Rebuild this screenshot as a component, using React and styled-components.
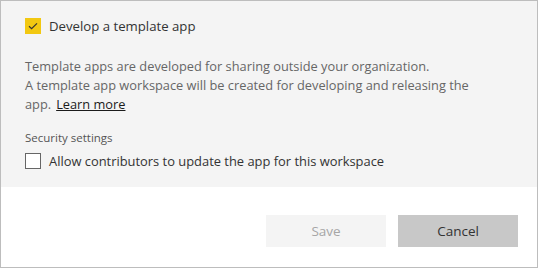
import React from 'react';
import styled, { createGlobalStyle } from 'styled-components';

const GlobalStyle = createGlobalStyle`
  html, body {
    margin: 0;
    padding: 0;
    background: #ffffff;
  }
  body {
    font-family: "Open Sans", "Noto Sans", sans-serif;
  }
`;

const Dialog = styled.div`
  width: 538px;
  height: 268px;
  box-sizing: border-box;
  border: 1px solid #bdbdbd;
  display: flex;
  flex-direction: column;
  background: #ffffff;
`;

const Panel = styled.div`
  background: #f4f4f4;
  height: 186px;
  box-sizing: border-box;
  padding: 17px 24px 0 24px;
  display: flex;
  flex-direction: column;
`;

const CheckRow = styled.label`
  display: flex;
  align-items: center;
  gap: 8px;
  margin-top: ${(p) => p.$offset || 0}px;
  font-size: ${(p) => (p.$large ? '13.2px' : '12.9px')};
  line-height: 16px;
  color: #333333;
  cursor: pointer;
`;

const Box = styled.span`
  width: 16px;
  height: 16px;
  box-sizing: border-box;
  flex: none;
  display: flex;
  align-items: center;
  justify-content: center;
  background: ${(p) => (p.$checked ? '#f2c811' : '#ffffff')};
  border: ${(p) => (p.$checked ? 'none' : '1px solid #666666')};
`;

const Description = styled.p`
  margin: 23px 0 0 0;
  font-size: 12.8px;
  line-height: 19px;
  color: #666666;
`;

const LearnMore = styled.a`
  color: #1b1b1b;
  text-decoration: underline;
  margin-left: 5px;
  cursor: pointer;
`;

const SectionTitle = styled.div`
  margin-top: 16px;
  font-size: 11.5px;
  line-height: 16px;
  color: #555555;
`;

const Footer = styled.div`
  flex: 1;
  display: flex;
  justify-content: flex-end;
  align-items: flex-start;
  gap: 12px;
  padding: 28px 19px 0 0;
`;

const Button = styled.button`
  width: 120px;
  height: 32px;
  border: none;
  padding: 0;
  font-family: inherit;
  font-size: 13.5px;
  background: ${(p) => (p.disabled ? '#f4f4f4' : '#c8c8c8')};
  color: ${(p) => (p.disabled ? '#a6a6a6' : '#333333')};
  cursor: ${(p) => (p.disabled ? 'default' : 'pointer')};
`;

const Check = () => (
  <svg width="12" height="12" viewBox="0 0 12 12">
    <path d="M2 6.2 L4.6 8.6 L10 3.4" fill="none" stroke="#333" strokeWidth="1.2" />
  </svg>
);

export default function App() {
  return (
    <>
      <GlobalStyle />
      <Dialog>
        <Panel>
          <CheckRow $large>
            <Box $checked>
              <Check />
            </Box>
            Develop a template app
          </CheckRow>
          <Description>
            Template apps are developed for sharing outside your organization.
            <br />
            A template app workspace will be created for developing and releasing the
            app.
            <LearnMore>Learn more</LearnMore>
          </Description>
          <SectionTitle>Security settings</SectionTitle>
          <CheckRow $offset={7}>
            <Box />
            Allow contributors to update the app for this workspace
          </CheckRow>
        </Panel>
        <Footer>
          <Button disabled>Save</Button>
          <Button>Cancel</Button>
        </Footer>
      </Dialog>
    </>
  );
}
